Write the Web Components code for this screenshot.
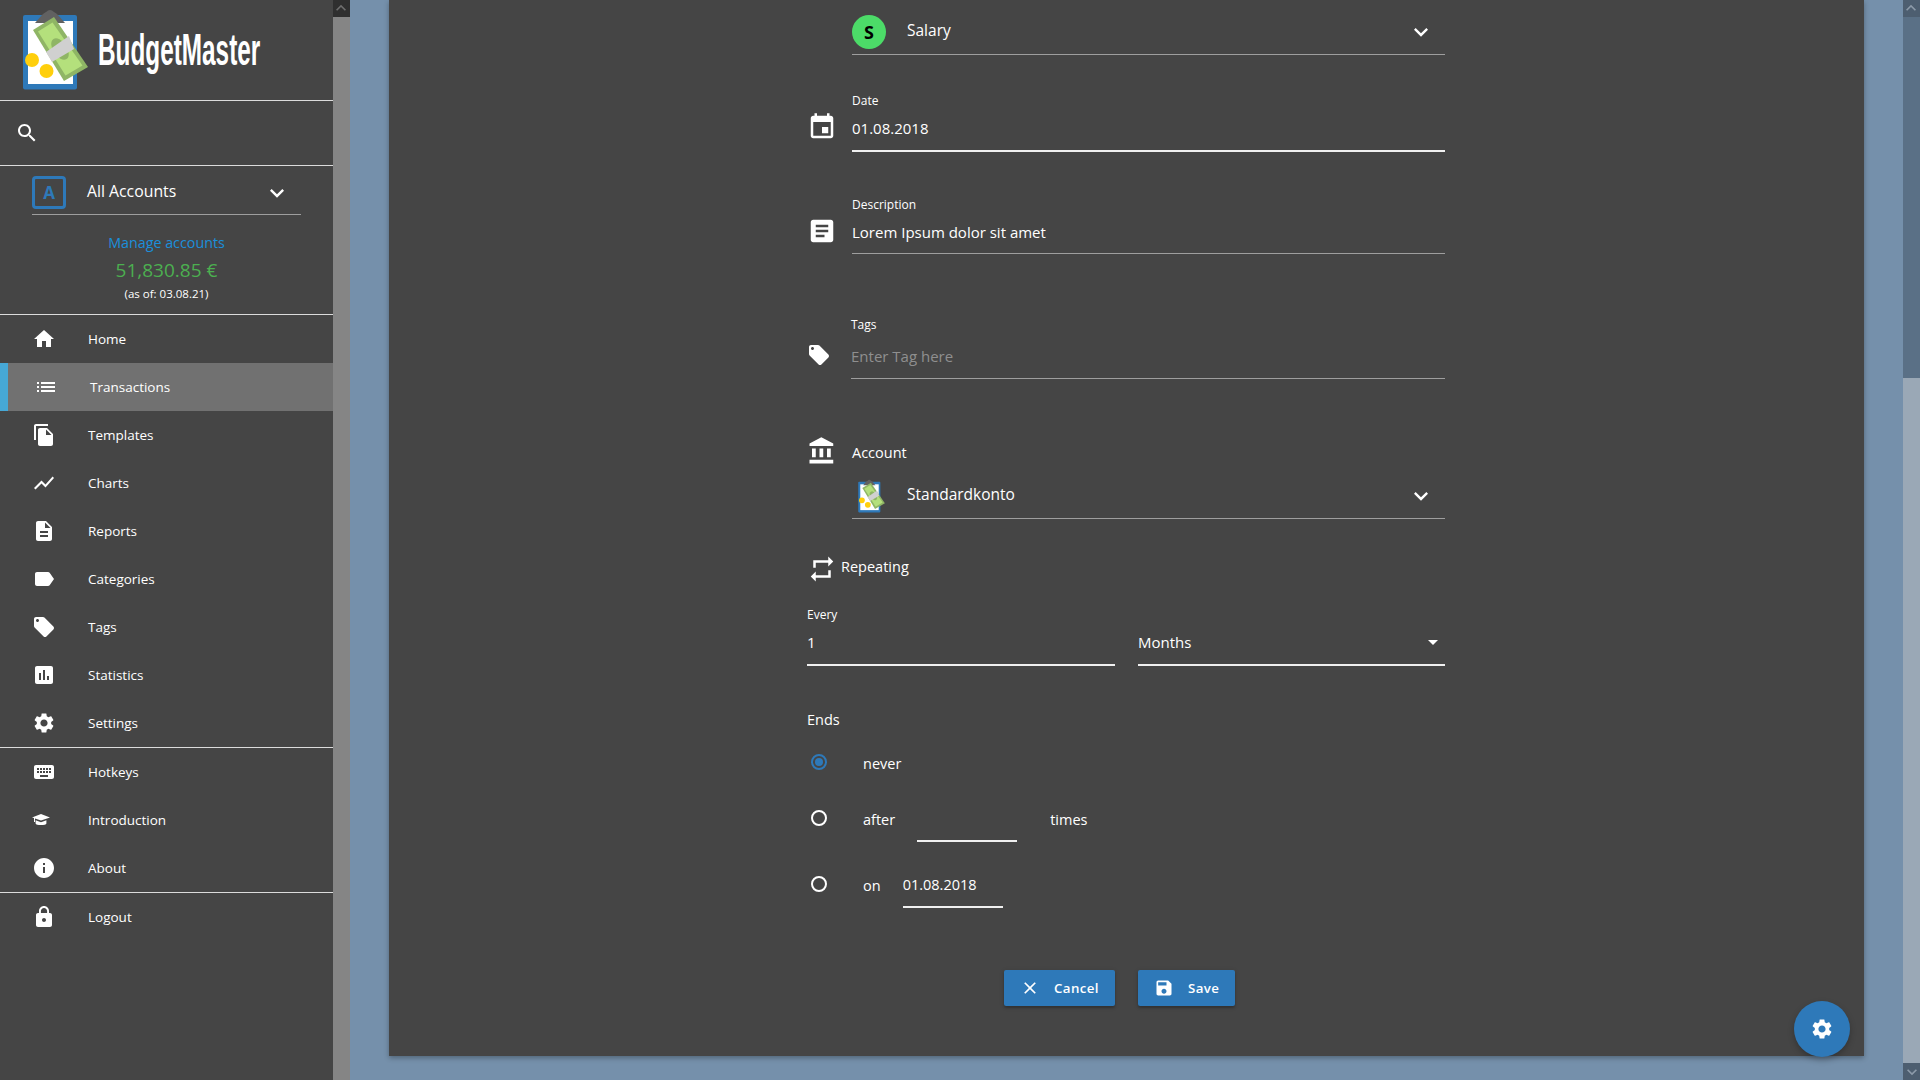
<!DOCTYPE html>
<html>
<head>
<meta charset="utf-8">
<title>BudgetMaster</title>
<style>
	html, body { margin: 0; height: 100%; overflow: hidden; }
	body { background: #7590ab; color: #fff; font-family: "Open Sans", "Noto Sans", sans-serif; }
</style>
</head>
<body>
<bm-app>
	<bm-sidebar slot="side">
		<bm-nav-item icon="home">Home</bm-nav-item>
		<bm-nav-item icon="list" active>Transactions</bm-nav-item>
		<bm-nav-item icon="copy">Templates</bm-nav-item>
		<bm-nav-item icon="chart">Charts</bm-nav-item>
		<bm-nav-item icon="report">Reports</bm-nav-item>
		<bm-nav-item icon="label">Categories</bm-nav-item>
		<bm-nav-item icon="tag">Tags</bm-nav-item>
		<bm-nav-item icon="stats">Statistics</bm-nav-item>
		<bm-nav-item icon="settings">Settings</bm-nav-item>
		<bm-divider></bm-divider>
		<bm-nav-item icon="keyboard">Hotkeys</bm-nav-item>
		<bm-nav-item icon="school">Introduction</bm-nav-item>
		<bm-nav-item icon="info">About</bm-nav-item>
		<bm-divider></bm-divider>
		<bm-nav-item icon="lock">Logout</bm-nav-item>
	</bm-sidebar>
	<bm-card>
		<bm-select text="Salary"><bm-badge slot="pic">S</bm-badge></bm-select>
		<bm-field style="margin-top:38px" icon="event" size="30" label="Date" value="01.08.2018" strong area="41" shift="-3"></bm-field>
		<bm-field style="margin-top:45px" icon="notes" size="30" dy="1" label="Description" value="Lorem Ipsum dolor sit amet" area="40" shift="-2"></bm-field>
		<bm-field style="margin-top:63px;margin-left:-1px" icon="tag" size="24" dx="1" dy="2" label="Tags" placeholder="Enter Tag here" area="45" shift="2"></bm-field>
		<bm-heading style="margin-top:61px" icon="bank" gap="15" up="-1">Account</bm-heading>
		<bm-select text="Standardkonto"><bm-logo slot="pic" size="34" style="margin-left:5px"></bm-logo></bm-select>
		<bm-heading style="margin-top:35px" icon="repeat" gap="4" up="3">Repeating</bm-heading>
		<bm-repeat-every style="margin-top:29px"></bm-repeat-every>
		<bm-ends style="margin-top:42px"></bm-ends>
		<bm-actions style="margin-top:62px"></bm-actions>
	</bm-card>
</bm-app>
<bm-fab></bm-fab>

<script>
	// material icons used all over the app
	const ICONS = {
		home: 'M10 20v-6h4v6h5v-8h3L12 3 2 12h3v8z',
		list: 'M3 13h2v-2H3v2zm0 4h2v-2H3v2zm0-8h2V7H3v2zm4 4h14v-2H7v2zm0 4h14v-2H7v2zM7 7v2h14V7H7z',
		copy: 'M16 1H4c-1.1 0-2 .9-2 2v14h2V3h12V1zm-1 4l6 6v10c0 1.1-.9 2-2 2H7.99C6.89 23 6 22.1 6 21l.01-14c0-1.1.89-2 1.99-2h7zm-1 7h5.5L14 6.5V12z',
		chart: 'M3.5 18.49l6-6.01 4 4L22 6.92l-1.41-1.41-7.09 7.97-4-4L2 16.99z',
		report: 'M14 2H6c-1.1 0-1.99.9-1.99 2L4 20c0 1.1.89 2 1.99 2H18c1.1 0 2-.9 2-2V8l-6-6zm2 16H8v-2h8v2zm0-4H8v-2h8v2zm-3-5V3.5L18.5 9H13z',
		label: 'M17.63 5.84C17.27 5.33 16.67 5 16 5L5 5.01C3.9 5.01 3 5.9 3 7v10c0 1.1.9 1.99 2 1.99L16 19c.67 0 1.27-.33 1.63-.84L22 12l-4.37-6.16z',
		tag: 'M21.41 11.58l-9-9C12.05 2.22 11.55 2 11 2H4c-1.1 0-2 .9-2 2v7c0 .55.22 1.05.59 1.42l9 9c.36.36.86.58 1.41.58.55 0 1.05-.22 1.41-.59l7-7c.37-.36.59-.86.59-1.41 0-.55-.23-1.06-.59-1.42zM5.5 7C4.67 7 4 6.33 4 5.5S4.67 4 5.5 4 7 4.67 7 5.5 6.33 7 5.5 7z',
		stats: 'M19 3H5c-1.1 0-2 .9-2 2v14c0 1.1.9 2 2 2h14c1.1 0 2-.9 2-2V5c0-1.1-.9-2-2-2zM9 17H7v-7h2v7zm4 0h-2V7h2v10zm4 0h-2v-4h2v4z',
		settings: 'M19.14 12.94c.04-.3.06-.61.06-.94 0-.32-.02-.64-.07-.94l2.03-1.58c.18-.14.23-.41.12-.61l-1.92-3.32c-.12-.22-.37-.29-.59-.22l-2.39.96c-.5-.38-1.03-.7-1.62-.94l-.36-2.54c-.04-.24-.24-.41-.48-.41h-3.84c-.24 0-.43.17-.47.41l-.36 2.54c-.59.24-1.13.57-1.62.94l-2.39-.96c-.22-.08-.47 0-.59.22L2.74 8.87c-.12.21-.08.47.12.61l2.03 1.58c-.05.3-.09.63-.09.94s.02.64.07.94l-2.03 1.58c-.18.14-.23.41-.12.61l1.92 3.32c.12.22.37.29.59.22l2.39-.96c.5.38 1.03.7 1.62.94l.36 2.54c.05.24.24.41.48.41h3.84c.24 0 .44-.17.47-.41l.36-2.54c.59-.24 1.13-.56 1.62-.94l2.39.96c.22.08.47 0 .59-.22l1.92-3.32c.12-.22.07-.47-.12-.61l-2.01-1.58zM12 15.6c-1.98 0-3.6-1.62-3.6-3.6s1.62-3.6 3.6-3.6 3.6 1.62 3.6 3.6-1.62 3.6-3.6 3.6z',
		keyboard: 'M20 5H4c-1.1 0-1.99.9-1.99 2L2 17c0 1.1.9 2 2 2h16c1.1 0 2-.9 2-2V7c0-1.1-.9-2-2-2zm-9 3h2v2h-2V8zm0 3h2v2h-2v-2zM8 8h2v2H8V8zm0 3h2v2H8v-2zm-1 2H5v-2h2v2zm0-3H5V8h2v2zm9 7H8v-2h8v2zm0-4h-2v-2h2v2zm0-3h-2V8h2v2zm3 3h-2v-2h2v2zm0-3h-2V8h2v2z',
		school: 'M9 6L18 9.4 9 12.6 3 10.4V14H2V10L0 9.4zM3.6 12.2L9 14.2 14.4 12.2V15.4C14.4 17.4 3.6 17.4 3.6 15.4z',
		info: 'M12 2C6.48 2 2 6.48 2 12s4.48 10 10 10 10-4.48 10-10S17.52 2 12 2zm1 15h-2v-6h2v6zm0-8h-2V7h2v2z',
		lock: 'M18 8h-1V6c0-2.76-2.24-5-5-5S7 3.24 7 6v2H6c-1.1 0-2 .9-2 2v10c0 1.1.9 2 2 2h12c1.1 0 2-.9 2-2V10c0-1.1-.9-2-2-2zm-6 9c-1.1 0-2-.9-2-2s.9-2 2-2 2 .9 2 2-.9 2-2 2zm3.1-9H8.9V6c0-1.71 1.39-3.1 3.1-3.1 1.71 0 3.1 1.39 3.1 3.1v2z',
		search: 'M15.5 14h-.79l-.28-.27C15.41 12.59 16 11.11 16 9.5 16 5.91 13.09 3 9.5 3S3 5.91 3 9.5 5.91 16 9.5 16c1.61 0 3.09-.59 4.23-1.57l.27.28v.79l5 4.99L20.49 19l-4.99-5zm-6 0C7.01 14 5 11.99 5 9.5S7.01 5 9.5 5 14 7.01 14 9.5 11.99 14 9.5 14z',
		event: 'M17 12h-5v5h5v-5zM16 1v2H8V1H6v2H5c-1.11 0-1.99.9-1.99 2L3 19c0 1.1.89 2 2 2h14c1.1 0 2-.9 2-2V5c0-1.1-.9-2-2-2h-1V1h-2zm3 18H5V8h14v11z',
		notes: 'M19 3H5c-1.1 0-2 .9-2 2v14c0 1.1.9 2 2 2h14c1.1 0 2-.9 2-2V5c0-1.1-.9-2-2-2zm-5 14H7v-2h7v2zm3-4H7v-2h10v2zm0-4H7V7h10v2z',
		bank: 'M4 10v7h3v-7H4zm6 0v7h3v-7h-3zM2 22h19v-3H2v3zm14-12v7h3v-7h-3zm-4.5-9L2 6v2h19V6l-9.5-5z',
		repeat: 'M7 7h10v3l4-4-4-4v3H5v6h2V7zm10 10H7v-3l-4 4 4 4v-3h12v-6h-2v4z',
		close: 'M19 6.41L17.59 5 12 10.59 6.41 5 5 6.41 10.59 12 5 17.59 6.41 19 12 13.41 17.59 19 19 17.59 13.41 12z',
		save: 'M17 3H5c-1.11 0-2 .9-2 2v14c0 1.1.89 2 2 2h14c1.1 0 2-.9 2-2V7l-4-4zm-5 16c-1.66 0-3-1.34-3-3s1.34-3 3-3 3 1.34 3 3-1.34 3-3 3zm3-10H5V5h10v4z',
		chevron: 'M7.41 8.59L12 13.17l4.59-4.58L18 10l-6 6-6-6z',
		caret: 'M7 10l5 5 5-5z'
	};

	// an svg icon, picked by name
	class BmIcon extends HTMLElement {
		constructor() {
			super();
			this.attachShadow({ mode: 'open' });
			const size = this.getAttribute('size') || 24;
			this.shadowRoot.innerHTML = `
				<style>
					:host { display: block; width: ${size}px; height: ${size}px; flex: none; }
					svg { display: block; width: 100%; height: 100%; fill: currentColor; }
				</style>
				<svg viewBox="0 0 24 24"><path d="${ICONS[this.getAttribute('name')]}"></path></svg>`;
		}
	}

	// clipboard logo with the bank note and the coins
	class BmLogo extends HTMLElement {
		constructor() {
			super();
			this.attachShadow({ mode: 'open' });
			const size = this.getAttribute('size') || 83;
			this.shadowRoot.innerHTML = `
				<style>
					:host { display: block; height: ${size}px; width: ${size * 70 / 83}px; flex: none; }
					svg { display: block; width: 100%; height: 100%; }
				</style>
				<svg viewBox="20 8 70 83">
					<rect x="23" y="15" width="54" height="74.500" rx="2" fill="#2e79b9"></rect>
					<rect x="28" y="21" width="45" height="63" fill="#fff"></rect>
					<path d="M35 23 L42 15 Q44 13 46 12 Q50 8 54 12 Q56 13 58 15 L65 23 Z" fill="#616161"></path>
					<circle cx="32" cy="60" r="7" fill="#ffcf0c"></circle>
					<circle cx="46.500" cy="71" r="7" fill="#ffcf0c"></circle>
					<path d="M33 30 L54 17 L88 67 L64 81 Z" fill="#8fb565"></path>
					<path d="M38 31.500 L52.500 22.500 L82.500 65.500 L65.500 75.500 Z" fill="#b4e07c"></path>
					<ellipse cx="60" cy="49" rx="7" ry="12" transform="rotate(-33 60 49)" fill="#8fb565"></ellipse>
					<path d="M46 52 L69 36 L74 49 L52 62 Z" fill="#d0d0d0"></path>
				</svg>`;
		}
	}

	// thin white line between the sections of the sidebar
	class BmDivider extends HTMLElement {
		constructor() {
			super();
			this.attachShadow({ mode: 'open' });
			this.shadowRoot.innerHTML = `<style>:host { display: block; height: 1px; background: #dcdcdc; }</style>`;
		}
	}

	// one entry of the navigation
	class BmNavItem extends HTMLElement {
		constructor() {
			super();
			this.attachShadow({ mode: 'open' });
			this.shadowRoot.innerHTML = `
				<style>
					:host { display: flex; align-items: center; height: 48px; padding-left: 32px; gap: 32px; box-sizing: border-box; color: #fff; font-size: 13.500px; font-weight: 500; }
					:host([active]) { background: #717171; border-left: 8px solid #46a8d6; padding-left: 26px; }
				</style>
				<bm-icon name="${this.getAttribute('icon')}"></bm-icon>
				<slot></slot>`;
		}
	}

	// sidebar scrollbar, or the one of the page when given a track
	class BmScrollbar extends HTMLElement {
		constructor() {
			super();
			this.attachShadow({ mode: 'open' });
			const page = this.hasAttribute('page');
			this.shadowRoot.innerHTML = `
				<style>
					:host { display: flex; flex-direction: column; width: 17px; flex: none; height: 100%; background: ${page ? '#5a7086' : '#858585'}; }
					.btn { height: 17px; flex: none; display: flex; align-items: center; justify-content: center; background: ${page ? '#4d5e70' : '#2f2f2f'}; color: ${page ? '#8c9aa9' : '#6e6e6e'}; }
					.up { transform: rotate(180deg); }
					.space { height: 361px; flex: none; }
					.thumb { flex: 1; background: ${page ? '#9aa8b6' : '#858585'}; }
				</style>
				<div class="btn up"><bm-icon name="chevron" size="20"></bm-icon></div>
				${page ? '<div class="space"></div>' : ''}
				<div class="thumb"></div>
				${page ? '<div class="btn"><bm-icon name="chevron" size="20"></bm-icon></div>' : ''}`;
		}
	}

	// left column: logo, search, account switch, navigation
	class BmSidebar extends HTMLElement {
		constructor() {
			super();
			this.attachShadow({ mode: 'open' });
			this.shadowRoot.innerHTML = `
				<style>
					:host { display: flex; width: 350px; height: 100%; flex: none; }
					.col { width: 333px; background: #454545; }
					.brand { height: 100px; display: flex; align-items: flex-start; padding: 8px 0 0 20px; box-sizing: border-box; }
					.title { font-family: "Liberation Sans", sans-serif; font-weight: 700; font-size: 44px; line-height: 50px; margin: 17px 0 0 8px; transform: scaleX(.553); transform-origin: left center; white-space: nowrap; }
					.search { height: 64px; padding: 20px 0 0 15px; box-sizing: border-box; }
					.accounts { height: 148px; box-sizing: border-box; padding-top: 10px; text-align: center; }
					.switch { display: flex; align-items: center; margin: 0 32px; height: 39px; box-sizing: border-box; border-bottom: 1px solid #9e9e9e; padding-bottom: 6px; }
					.square { width: 34px; height: 33px; box-sizing: border-box; border: 3px solid #2e79b9; border-radius: 4px; color: #2e79b9; font-weight: 700; font-size: 17px; line-height: 28px; text-align: center; }
					.name { flex: 1; text-align: left; margin-left: 21px; font-size: 15.800px; margin-top: -3px; }
					.chev { margin-right: 10px; margin-top: 2px; }
					.manage { margin-top: 18px; color: #1b8fdb; font-size: 14.300px; line-height: 20px; }
					.sum { color: #4caf50; font-size: 19px; line-height: 28px; margin-top: 3px; }
					.asof { font-size: 11.500px; line-height: 16px; margin-top: 2px; }
				</style>
				<div class="col">
					<div class="brand"><bm-logo></bm-logo><div class="title">BudgetMaster</div></div>
					<bm-divider></bm-divider>
					<div class="search"><bm-icon name="search"></bm-icon></div>
					<bm-divider></bm-divider>
					<div class="accounts">
						<div class="switch">
							<div class="square">A</div>
							<div class="name">All Accounts</div>
							<bm-icon class="chev" name="chevron" size="28"></bm-icon>
						</div>
						<div class="manage">Manage accounts</div>
						<div class="sum">51,830.85 €</div>
						<div class="asof">(as of: 03.08.21)</div>
					</div>
					<bm-divider></bm-divider>
					<slot></slot>
				</div>
				<bm-scrollbar></bm-scrollbar>`;
		}
	}

	// page frame: sidebar, scrolling area with the card, page scrollbar
	class BmApp extends HTMLElement {
		constructor() {
			super();
			this.attachShadow({ mode: 'open' });
			this.shadowRoot.innerHTML = `
				<style>
					:host { display: flex; width: 1920px; height: 1080px; overflow: hidden; }
					main { flex: 1; padding: 0 39px; box-sizing: border-box; min-width: 0; }
				</style>
				<slot name="side"></slot>
				<main><slot></slot></main>
				<bm-scrollbar page></bm-scrollbar>`;
		}
	}

	// the dark sheet with the form
	class BmCard extends HTMLElement {
		constructor() {
			super();
			this.attachShadow({ mode: 'open' });
			this.shadowRoot.innerHTML = `
				<style>
					:host { display: block; height: 1056px; background: #454545; box-shadow: 0 2px 5px rgba(0,0,0,.3); }
					.form { width: 638px; margin-left: 418px; }
				</style>
				<div class="form"><slot></slot></div>`;
		}
	}

	// green round letter in front of a category
	class BmBadge extends HTMLElement {
		constructor() {
			super();
			this.attachShadow({ mode: 'open' });
			this.shadowRoot.innerHTML = `
				<style>
					:host { display: block; width: 34px; height: 34px; border-radius: 50%; background: #4cdb68; color: #000; font-weight: 700; font-size: 18px; line-height: 34px; text-align: center; }
				</style>
				<slot></slot>`;
		}
	}

	// dropdown row with a picture, its text and a chevron
	class BmSelect extends HTMLElement {
		constructor() {
			super();
			this.attachShadow({ mode: 'open' });
			this.shadowRoot.innerHTML = `
				<style>
					:host { display: block; margin-left: 45px; }
					.row { display: flex; align-items: flex-start; height: 55px; box-sizing: border-box; padding-top: 15px; border-bottom: 1px solid #9e9e9e; }
					.pic { width: 55px; flex: none; }
					.text { flex: 1; font-size: 15.500px; line-height: 20px; margin-top: 5px; }
					.chev { margin: 3px 10px 0 0; }
				</style>
				<div class="row">
					<div class="pic"><slot name="pic"></slot></div>
					<div class="text">${this.getAttribute('text')}</div>
					<bm-icon class="chev" name="chevron" size="28"></bm-icon>
				</div>`;
		}
	}

	// labelled input row with an icon in front
	class BmField extends HTMLElement {
		constructor() {
			super();
			this.attachShadow({ mode: 'open' });
			const value = this.getAttribute('value');
			const hint = this.getAttribute('placeholder');
			const area = +this.getAttribute('area');
			const shift = +this.getAttribute('shift');
			const dx = +this.getAttribute('dx');
			const dy = +this.getAttribute('dy');
			this.shadowRoot.innerHTML = `
				<style>
					:host { display: grid; grid-template-columns: 45px 1fr; }
					bm-icon { transform: translate(${dx}px, ${dy}px); align-self: center; margin-top: 9px; }
					label { display: block; font-size: 12px; line-height: 16px; }
					.input { height: ${area}px; line-height: ${area + shift}px; font-size: 15px; border-bottom: ${this.hasAttribute('strong') ? '2px solid #f0f0f0' : '1px solid #9e9e9e'}; }
					.hint { color: #8f8f8f; }
				</style>
				<bm-icon name="${this.getAttribute('icon')}" size="${this.getAttribute('size')}"></bm-icon>
				<div>
					<label>${this.getAttribute('label')}</label>
					<div class="input">${value ? value : `<span class="hint">${hint}</span>`}</div>
				</div>`;
		}
	}

	// plain title with an icon
	class BmHeading extends HTMLElement {
		constructor() {
			super();
			this.attachShadow({ mode: 'open' });
			this.shadowRoot.innerHTML = `
				<style>
					:host { display: flex; align-items: center; height: 24px; font-size: 14.500px; gap: ${this.getAttribute('gap')}px; }
					bm-icon { transform: translateY(${this.getAttribute('up')}px); }
				</style>
				<bm-icon name="${this.getAttribute('icon')}" size="30"></bm-icon>
				<slot></slot>`;
		}
	}

	// "every 1 months" inputs
	class BmRepeatEvery extends HTMLElement {
		constructor() {
			super();
			this.attachShadow({ mode: 'open' });
			this.shadowRoot.innerHTML = `
				<style>
					:host { display: grid; grid-template-columns: 308px 307px; column-gap: 23px; }
					label { display: block; font-size: 12px; line-height: 16px; height: 16px; }
					.input { display: flex; align-items: center; justify-content: space-between; height: 41px; box-sizing: content-box; font-size: 15px; border-bottom: 2px solid #f0f0f0; }
					.input span, .input bm-icon { transform: translateY(-2px); }
				</style>
				<div><label>Every</label><div class="input"><span>1</span></div></div>
				<div><label></label><div class="input"><span>Months</span><bm-icon name="caret" size="24"></bm-icon></div></div>`;
		}
	}

	// round radio mark
	class BmRadio extends HTMLElement {
		constructor() {
			super();
			this.attachShadow({ mode: 'open' });
			const on = this.hasAttribute('checked');
			this.shadowRoot.innerHTML = `
				<style>
					:host { display: block; position: relative; width: 16px; height: 16px; box-sizing: border-box; border-radius: 50%; border: 2px solid ${on ? '#2e79b9' : '#fff'}; flex: none; margin: 4px 0 0 4px; }
					i { position: absolute; inset: 2px; border-radius: 50%; background: ${on ? '#2e79b9' : 'transparent'}; }
				</style>
				<i></i>`;
		}
	}

	// the block of options for when the repetition stops
	class BmEnds extends HTMLElement {
		constructor() {
			super();
			this.attachShadow({ mode: 'open' });
			this.shadowRoot.innerHTML = `
				<style>
					:host { display: block; font-size: 14.500px; }
					.title { height: 24px; line-height: 24px; }
					.opt { display: flex; align-items: flex-start; height: 28px; line-height: 28px; }
					.opt.tall { height: 36px; }
					.lead { width: 36px; flex: none; }
					.box { box-sizing: border-box; width: 100px; height: 36px; border-bottom: 2px solid #f0f0f0; line-height: 26px; }
				</style>
				<div class="title">Ends</div>
				<div class="opt" style="margin-top:18px"><bm-radio checked></bm-radio><span class="lead"></span>never</div>
				<div class="opt tall" style="margin-top:28px"><bm-radio></bm-radio><span class="lead"></span>after<div class="box" style="margin-left:22px"></div><span style="margin-left:33px">times</span></div>
				<div class="opt tall" style="margin-top:30px"><bm-radio></bm-radio><span class="lead"></span>on<div class="box" style="margin-left:22px">01.08.2018</div></div>`;
		}
	}

	// cancel and save
	class BmActions extends HTMLElement {
		constructor() {
			super();
			this.attachShadow({ mode: 'open' });
			this.shadowRoot.innerHTML = `
				<style>
					:host { display: flex; gap: 23px; padding-left: 197px; }
					.btn { display: flex; align-items: center; height: 36px; gap: 14px; padding: 0 16px 0 16px; box-sizing: border-box; background: #2e79b9; border-radius: 2px; font-size: 13.300px; font-weight: 600; letter-spacing: .4px; box-shadow: 0 2px 2px rgba(0,0,0,.2), 0 1px 5px rgba(0,0,0,.15); }
				</style>
				<div class="btn"><bm-icon name="close" size="20"></bm-icon>Cancel</div>
				<div class="btn"><bm-icon name="save" size="20"></bm-icon>Save</div>`;
		}
	}

	// round settings button that floats over the card corner
	class BmFab extends HTMLElement {
		constructor() {
			super();
			this.attachShadow({ mode: 'open' });
			this.shadowRoot.innerHTML = `
				<style>
					:host { position: fixed; right: 70px; bottom: 23px; width: 56px; height: 56px; display: flex; align-items: center; justify-content: center; border-radius: 50%; background: #2e79b9; color: #fff; box-shadow: 0 3px 6px rgba(0,0,0,.25); }
				</style>
				<bm-icon name="settings"></bm-icon>`;
		}
	}

	// register everything, icons first so they upgrade with their parents
	customElements.define('bm-icon', BmIcon);
	customElements.define('bm-logo', BmLogo);
	customElements.define('bm-divider', BmDivider);
	customElements.define('bm-nav-item', BmNavItem);
	customElements.define('bm-scrollbar', BmScrollbar);
	customElements.define('bm-sidebar', BmSidebar);
	customElements.define('bm-app', BmApp);
	customElements.define('bm-card', BmCard);
	customElements.define('bm-badge', BmBadge);
	customElements.define('bm-select', BmSelect);
	customElements.define('bm-field', BmField);
	customElements.define('bm-heading', BmHeading);
	customElements.define('bm-repeat-every', BmRepeatEvery);
	customElements.define('bm-radio', BmRadio);
	customElements.define('bm-ends', BmEnds);
	customElements.define('bm-actions', BmActions);
	customElements.define('bm-fab', BmFab);
</script>
</body>
</html>
